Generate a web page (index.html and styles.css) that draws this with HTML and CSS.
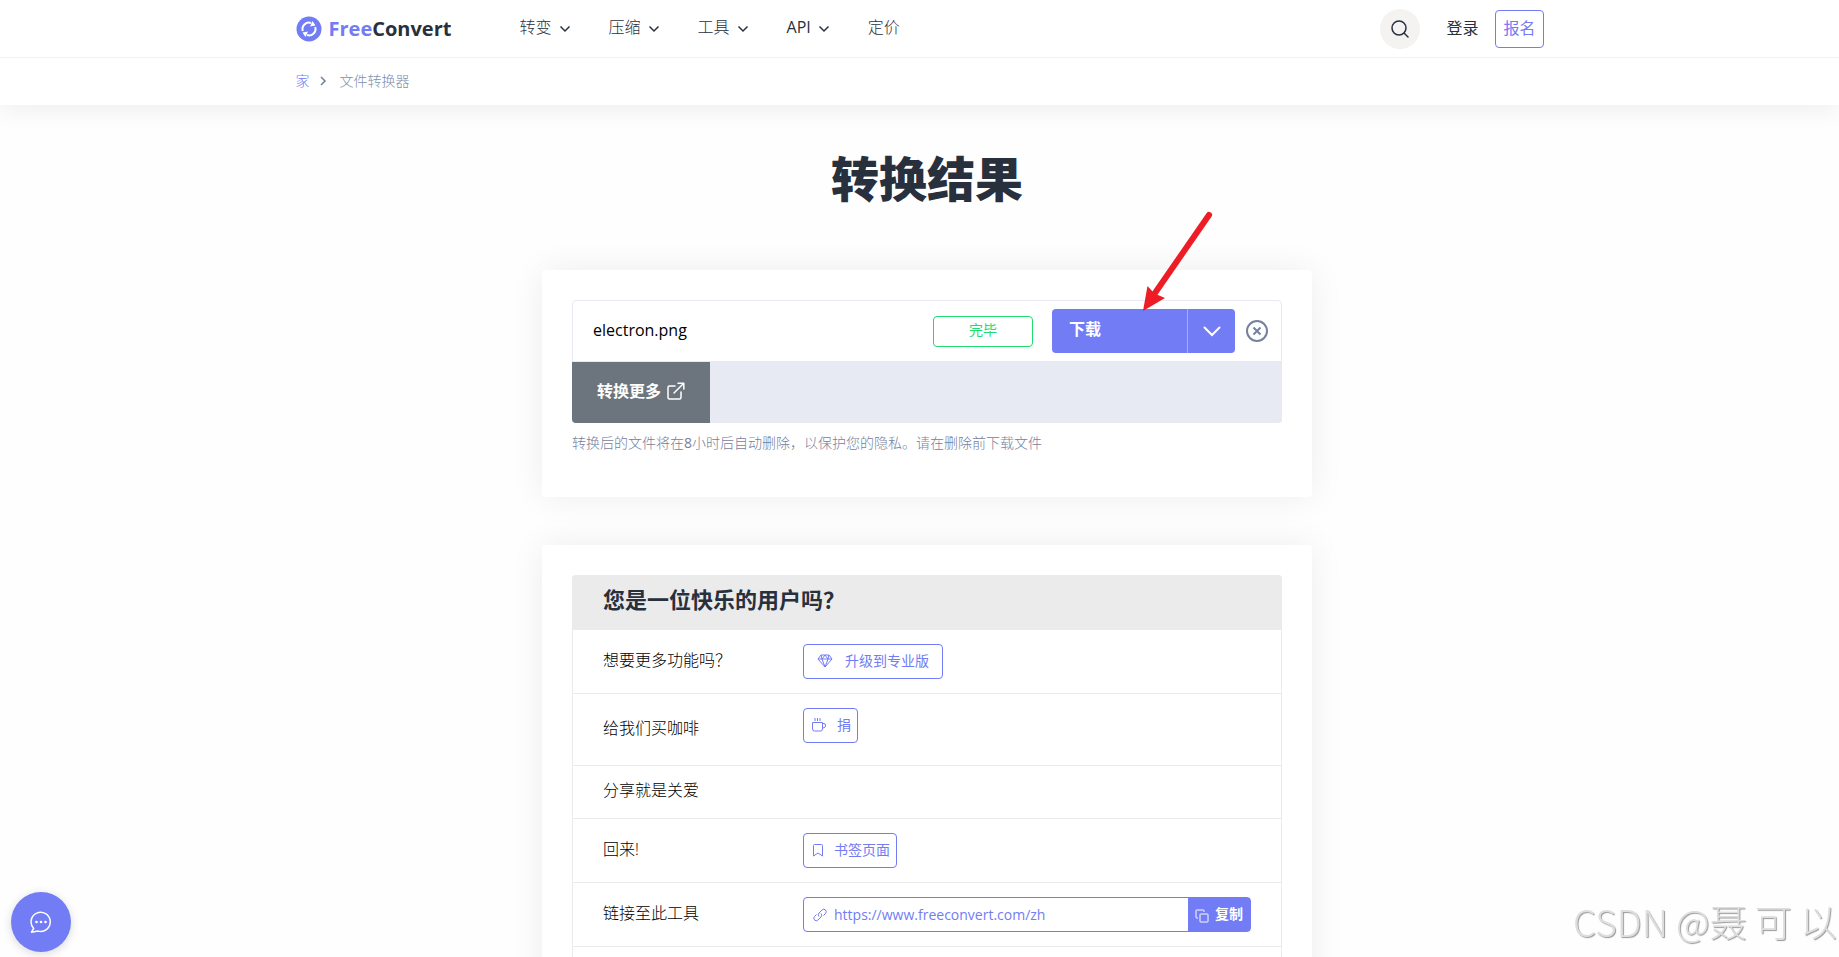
FILE: index.html
```
<!DOCTYPE html>
<html lang="zh-CN">

<head>
  <meta charset="UTF-8">
  <meta name="viewport" content="width=device-width, initial-scale=1.0">
  <title>FreeConvert - 转换结果</title>
  <link rel="stylesheet" href="styles.css">
</head>

<body>
  <!-- 顶部导航 -->
  <header class="site-header">
    <div class="navbar">
      <div class="container navbar-inner">
        <a class="logo" href="#">
          <svg width="26" height="26" viewBox="0 0 26 26" fill="none">
            <circle cx="13" cy="13" r="12.5" fill="#727cf5"/>
            <path d="M6.8 15A6.4 6.4 0 0 1 15 7" stroke="#fff" stroke-width="2"/>
            <path d="M19.2 11A6.4 6.4 0 0 1 11 19" stroke="#fff" stroke-width="2"/>
            <path d="M16.5 5 19.5 9.5 14 10.5zM9.5 21 6.5 16.5 12 15.5z" fill="#fff"/>
          </svg>
          <span class="logo-text"><span class="logo-free">Free</span>Convert</span>
        </a>
        <nav class="menu">
          <a href="#">转变 <svg class="caret" viewBox="0 0 12 8"><path d="m1.5 1.5 4.5 4.5 4.5-4.5"/></svg></a>
          <a href="#">压缩 <svg class="caret" viewBox="0 0 12 8"><path d="m1.5 1.5 4.5 4.5 4.5-4.5"/></svg></a>
          <a href="#">工具 <svg class="caret" viewBox="0 0 12 8"><path d="m1.5 1.5 4.5 4.5 4.5-4.5"/></svg></a>
          <a class="menu-api" href="#">API <svg class="caret" viewBox="0 0 12 8"><path d="m1.5 1.5 4.5 4.5 4.5-4.5"/></svg></a>
          <a href="#">定价</a>
        </nav>
        <div class="account">
          <button class="search-btn" aria-label="搜索">
            <svg width="18" height="18" viewBox="0 0 18 18" fill="none" stroke="#29303d" stroke-width="1.5" stroke-linecap="round">
              <circle cx="8" cy="8" r="7"/>
              <path d="m13 13 4 4"/>
            </svg>
          </button>
          <a class="login" href="#">登录</a>
          <a class="signup" href="#">报名</a>
        </div>
      </div>
    </div>
    <div class="container breadcrumb">
      <a href="#">家</a>
      <svg width="7" height="10" viewBox="0 0 7 10" fill="none" stroke="#6f7f9d" stroke-width="1.5"><path d="m1 1 4 4-4 4"/></svg>
      <span>文件转换器</span>
    </div>
  </header>

  <main class="main">
    <h1>转换结果</h1>

    <!-- 转换结果 -->
    <section class="card result-card">
      <div class="file-list">
        <div class="file-row">
          <span class="file-name">electron.png</span>
          <span class="status">完毕</span>
          <div class="download">
            <button class="download-btn">下载</button>
            <button class="download-more" aria-label="更多">
              <svg width="18" height="11" viewBox="0 0 18 11" fill="none" stroke="#fff" stroke-width="2" stroke-linecap="round"><path d="m1.5 1.5 7.5 7.5 7.5-7.5"/></svg>
            </button>
            <svg class="arrow" width="72" height="102" viewBox="0 0 72 102">
              <path d="M68 6 14 84" stroke="#ee1c25" stroke-width="6" stroke-linecap="round"/>
              <path d="M2 102 6.5 77 12 83 17 86 24 89z" fill="#ee1c25"/>
            </svg>
          </div>
          <button class="remove" aria-label="删除">
            <svg width="22" height="22" viewBox="0 0 22 22" fill="none" stroke="#75819d" stroke-width="2">
              <circle cx="11" cy="11" r="10"/>
              <path d="m7.5 7.5 7 7m0-7-7 7"/>
            </svg>
          </button>
        </div>
        <div class="file-footer">
          <button class="more-btn">转换更多
            <svg width="18" height="18" viewBox="0 0 18 18" fill="none" stroke="#fff" stroke-width="1.5" stroke-linecap="round" stroke-linejoin="round">
              <path d="M8 4H2.5Q1 4 1 5.5v10Q1 17 2.5 17h10q1.500 0 1.500-1.500V10M7 11 16.500 1.500M11 1.200h5.800V7"/>
            </svg>
          </button>
        </div>
      </div>
      <p class="note">转换后的文件将在<b>8</b>小时后自动删除，以保护您的隐私。请在删除前下载文件</p>
    </section>

    <!-- 用户反馈 -->
    <section class="card">
      <div class="happy">
        <h2>您是一位快乐的用户吗？</h2>
        <div class="happy-row">
          <span class="happy-label">想要更多功能吗？</span>
          <button class="outline-btn upgrade">
            <svg width="16" height="14" viewBox="0 0 16 14"><path d="M4 1h8l3 4-7 8-7-8zM1 5h14M4 1l1 4 3 8 3-8 1-4M5 5l3-4 3 4"/></svg>
            升级到专业版
          </button>
        </div>
        <div class="happy-row coffee-row">
          <span class="happy-label">给我们买咖啡</span>
          <button class="outline-btn">
            <svg width="16" height="14" viewBox="0 0 16 14"><path d="M1.500 4.500h10v6.500q0 2-2 2h-6q-2 0-2-2zM11.500 5.500H13q1.500 0 1.500 1.500v1q0 2-3 2M4 0v3M6.500 0v3M9 0v3"/></svg>
            捐
          </button>
        </div>
        <div class="happy-row">
          <span class="happy-label">分享就是关爱</span>
        </div>
        <div class="happy-row">
          <span class="happy-label">回来!</span>
          <button class="outline-btn bookmark">
            <svg width="12" height="14" viewBox="0 0 12 14"><path d="M2.500 1.500h7q1 0 1 1v10.500L6 10l-4.500 3V2.500q0-1 1-1z"/></svg>
            书签页面
          </button>
        </div>
        <div class="happy-row">
          <label class="happy-label" for="tool-link">链接至此工具</label>
          <div class="link-box">
            <svg width="14" height="14" viewBox="0 0 14 14"><path d="M6 8.500a2.600 2.600 0 0 1 0-3.500l3-3a2.400 2.400 0 0 1 3.500 3.500l-2 2M8 5.500a2.600 2.600 0 0 1 0 3.500l-3 3A2.400 2.400 0 0 1 1.500 8.500l2-2"/></svg>
            <input type="text" id="tool-link" value="https://www.freeconvert.com/zh" readonly>
            <button class="copy-btn">
              <svg width="14" height="14" viewBox="0 0 14 14"><path d="M3 9H1.500Q1 9 1 8.500v-7Q1 1 1.500 1h7Q9 1 9 1.500V3M5.500 5h7q.5 0 .5.500v7q0 .5-.5.500h-7q-.5 0-.5-.5v-7q0-.5.5-.5z"/></svg>
              复制
            </button>
          </div>
        </div>
        <div class="happy-row"></div>
      </div>
    </section>
  </main>

  <!-- 在线客服 -->
  <button class="chat-btn" aria-label="在线客服">
    <svg width="22" height="22" viewBox="0 0 22 22" fill="none" stroke="#fff" stroke-width="1.5" stroke-linejoin="round">
      <path d="M3.7 17.5A9.6 9.6 0 1 1 8 20.1L1.5 21.2z"/>
      <g fill="#fff" stroke="none"><circle cx="6.5" cy="11" r="1.3"/><circle cx="11" cy="11" r="1.3"/><circle cx="15.5" cy="11" r="1.3"/></g>
    </svg>
  </button>

  <div class="watermark">CSDN @聂 可 以</div>
</body>

</html>
```

FILE: styles.css
```
/* 整体样式 */
* {
  box-sizing: border-box;
}

body {
  margin: 0;
  background-color: #fefefe;
  color: #29303d;
  font-family: "Open Sans", "Noto Sans CJK SC", sans-serif;
  font-size: 16px;
  line-height: 24px;
}

a {
  color: inherit;
  text-decoration: none;
}

button,
input {
  font: inherit;
  margin: 0;
}

button {
  cursor: pointer;
}

svg {
  flex: none;
}

.container {
  max-width: 1248px;
  margin: 0 auto;
}

/* 顶部导航 */
.site-header {
  background-color: #fff;
  box-shadow: 0 4px 24px rgba(0, 0, 0, 0.07);
}

.navbar {
  border-bottom: 1px solid #f1f1f1;
}

.navbar-inner {
  display: flex;
  align-items: center;
  height: 57px;
}

.logo {
  display: flex;
  align-items: center;
  gap: 7px;
  width: 224px;
}

.logo-text {
  font-size: 20px;
  font-weight: 700;
}

.logo-free {
  color: #727cf5;
}

.menu {
  display: flex;
  gap: 38px;
  padding-bottom: 3px;
  font-weight: 300;
}

.menu a {
  display: flex;
  align-items: center;
  gap: 7px;
}

.menu .menu-api {
  font-weight: 400;
}

.caret {
  width: 12px;
  height: 8px;
  margin-top: 3px;
  fill: none;
  stroke: #29303d;
  stroke-width: 1.5;
}

.account {
  display: flex;
  align-items: center;
  margin-left: auto;
}

.search-btn {
  display: flex;
  align-items: center;
  justify-content: center;
  width: 40px;
  height: 40px;
  padding: 0;
  border: none;
  border-radius: 50%;
  background-color: #f4f3f2;
}

.login {
  margin: 0 17px 0 26px;
  padding-bottom: 2px;
}

.signup {
  padding: 5px 7px 7px;
  border: 1px solid #727cf5;
  border-radius: 4px;
  color: #727cf5;
}

.breadcrumb {
  display: flex;
  align-items: center;
  height: 47px;
  padding-bottom: 2px;
  color: #8090ae;
  font-size: 14px;
  font-weight: 300;
}

.breadcrumb a {
  color: #727cf5;
}

.breadcrumb svg {
  margin: 0 13px 0 10px;
}

/* 主体 */
.main {
  max-width: 785px;
  margin: 0 auto;
  padding-left: 15px;
}

h1 {
  margin: 0;
  padding: 39px 0 56px;
  font-size: 48px;
  font-weight: 900;
  line-height: 70px;
  text-align: center;
}

.card {
  margin-bottom: 48px;
  padding: 30px;
  border-radius: 4px;
  background-color: #fff;
  box-shadow: 0 0 35px rgba(0, 0, 0, 0.07);
}

/* 文件列表 */
.file-list {
  border: 1px solid #e7eaf3;
  border-radius: 4px;
}

.file-row {
  display: flex;
  align-items: center;
  height: 61px;
  padding: 0 13px 0 20px;
  border-bottom: 1px solid #e7eaf3;
  color: #000;
}

.file-name {
  flex: 1;
  padding-bottom: 2px;
}

.status {
  width: 100px;
  height: 31px;
  border: 1px solid #1fdc70;
  border-radius: 4px;
  color: #1fdc70;
  font-size: 14px;
  line-height: 26px;
  text-align: center;
}

.download {
  display: flex;
  position: relative;
  height: 44px;
  margin: 0 11px 0 19px;
}

.download-btn,
.download-more {
  border: none;
  background-color: #727cf5;
  color: #fff;
}

.download-btn {
  width: 135px;
  padding: 0 17px 4px;
  border-radius: 4px 0 0 4px;
  font-weight: 700;
  text-align: left;
}

.download-more {
  width: 48px;
  padding: 0;
  border-left: 1px solid #a5abf9;
  border-radius: 0 4px 4px 0;
}

.arrow {
  position: absolute;
  left: 89px;
  bottom: 42px;
}

.remove {
  display: flex;
  padding: 0;
  border: none;
  background: none;
}

.file-footer {
  display: flex;
  margin: 0 -1px -1px;
  border-radius: 0 0 4px 4px;
  background-color: #e7eaf3;
}

.more-btn {
  display: flex;
  align-items: center;
  gap: 6px;
  height: 61px;
  padding: 0 25px 4px;
  border: none;
  border-radius: 0 0 0 4px;
  background-color: #6c757d;
  color: #fff;
  font-weight: 700;
}

.note {
  margin: 8px 0 12px;
  color: #75819d;
  font-size: 14px;
  font-weight: 300;
}

.note b {
  font-weight: 400;
}

/* 用户反馈 */
.happy {
  border: 1px solid #ebebeb;
  border-top: none;
  border-radius: 4px;
}

.happy h2 {
  margin: 0 -1px;
  padding: 8px 31px 15px;
  border-radius: 4px 4px 0 0;
  background-color: #ebebeb;
  font-size: 22px;
  font-weight: 700;
  line-height: 32px;
}

.happy-row {
  display: flex;
  align-items: center;
  padding: 14px 30px;
  border-bottom: 1px solid #ebebeb;
}

.happy-row:last-child {
  min-height: 64px;
  border-bottom: none;
}

.happy-label {
  width: 200px;
  margin: -2px 0 2px;
  color: #000;
  font-weight: 300;
}

.coffee-row {
  height: 72px;
  align-items: flex-start;
}

.coffee-row .happy-label {
  line-height: 44px;
}

.outline-btn {
  display: flex;
  align-items: center;
  gap: 10px;
  height: 35px;
  padding: 0 6px 2px 7px;
  border: 1px solid #727cf5;
  border-radius: 4px;
  background-color: #fff;
  color: #727cf5;
  font-size: 14px;
}

.upgrade {
  gap: 12px;
  padding: 0 13px 2px;
}

.bookmark {
  padding-left: 8px;
}

.outline-btn svg,
.link-box svg {
  fill: none;
  stroke: #727cf5;
  stroke-linejoin: round;
}

.link-box {
  display: flex;
  flex: 1;
  align-items: center;
  height: 35px;
  padding-left: 9px;
  border: 1px solid #727cf5;
  border-radius: 4px;
}

.link-box input {
  flex: 1;
  min-width: 0;
  padding: 0 7px;
  border: none;
  outline: none;
  background: none;
  color: #727cf5;
  font-size: 14px;
}

.copy-btn {
  display: flex;
  align-items: center;
  gap: 6px;
  align-self: stretch;
  padding: 0 7px 2px;
  border: none;
  background-color: #727cf5;
  color: #fff;
  font-size: 14px;
  font-weight: 700;
}

.link-box .copy-btn svg {
  margin-top: 4px;
  stroke: #fff;
}

/* 悬浮元素 */
.chat-btn {
  display: flex;
  align-items: center;
  justify-content: center;
  position: fixed;
  left: 11px;
  bottom: 5px;
  width: 60px;
  height: 60px;
  padding: 0;
  border: none;
  border-radius: 50%;
  background-color: #727cf5;
  box-shadow: 0 2px 10px rgba(0, 0, 0, 0.15);
}

.watermark {
  position: fixed;
  right: 2px;
  bottom: 11px;
  color: #dedede;
  font-family: "Noto Sans CJK SC", sans-serif;
  font-size: 37px;
  font-weight: 300;
  line-height: 50px;
  text-shadow: 1px 1px 1px #999;
}
```
